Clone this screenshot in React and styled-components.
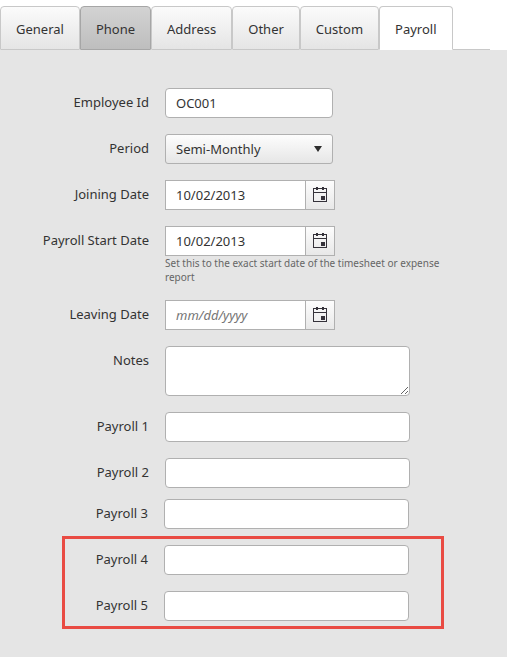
import { useState } from "react"
import styled, { createGlobalStyle } from "styled-components"

const tabs = ["General", "Phone", "Address", "Other", "Custom", "Payroll"];

function CalendarIcon() {
    return (
        <svg width="14" height="16" viewBox="0 0 14 16" shapeRendering="crispEdges" aria-hidden="true">
            <path d="M0 1h14v14H0z M1 2v3h12V2z M1 6v8h12V6z" fill="#35323a" fillRule="evenodd" />
            <path d="M3 0h2v3H3z M9 0h2v3H9z M8 9h4v4H8z" fill="#35323a" />
        </svg>
    )
}

function DateField({ id, label, value, hint }) {
    return (
        <Row>
            <Label htmlFor={id}>{label}</Label>
            <Control>
                <DateBox>
                    <DateInput id={id} type="text" placeholder="mm/dd/yyyy" defaultValue={value} />
                    <DateButton type="button" aria-label={`Open calendar for ${label}`}>
                        <CalendarIcon />
                    </DateButton>
                </DateBox>
                {hint && <Hint>{hint}</Hint>}
            </Control>
        </Row>
    )
}

function TextField({ id, label, value, wide }) {
    return (
        <Row>
            <Label htmlFor={id}>{label}</Label>
            <Control>
                <Input id={id} type="text" defaultValue={value} $wide={wide} />
            </Control>
        </Row>
    )
}

function App() {

    const [active, setactive] = useState("Payroll");
    const [period, setperiod] = useState("Semi-Monthly");

    return (
        <Page>
            <GlobalStyle />
            <TabBar role="tablist">
                {tabs.map((tab) => {
                    return (
                        <Tab
                            key={tab}
                            type="button"
                            role="tab"
                            aria-selected={active === tab}
                            $active={active === tab}
                            $pressed={tab === "Phone"}
                            onClick={() => setactive(tab)}
                        >
                            {tab}
                        </Tab>
                    )
                })}
                <TabLine />
            </TabBar>
            <Panel>
                <Fields>
                    <TextField id="employee-id" label="Employee Id" value="OC001" />
                    <Row>
                        <Label htmlFor="period">Period</Label>
                        <Control>
                            <SelectBox>
                                <Select id="period" value={period} onChange={(e) => setperiod(e.target.value)}>
                                    <option>Semi-Monthly</option>
                                </Select>
                                <Arrow width="8" height="6" viewBox="0 0 8 6" aria-hidden="true">
                                    <path d="M0 0h8L4 6z" fill="#2e2e2e" />
                                </Arrow>
                            </SelectBox>
                        </Control>
                    </Row>
                    <DateField id="joining-date" label="Joining Date" value="10/02/2013" />
                    <DateField
                        id="payroll-start"
                        label="Payroll Start Date"
                        value="10/02/2013"
                        hint="Set this to the exact start date of the timesheet or expense report"
                    />
                    <DateField id="leaving-date" label="Leaving Date" />
                    <Row>
                        <Label htmlFor="notes">Notes</Label>
                        <Control>
                            <TextArea id="notes" />
                        </Control>
                    </Row>
                    <TextField id="payroll-1" label="Payroll 1" wide />
                    <TextField id="payroll-2" label="Payroll 2" wide />
                </Fields>
                <CustomFields>
                    <TextField id="payroll-3" label="Payroll 3" wide />
                </CustomFields>
                <Highlight>
                    <TextField id="payroll-4" label="Payroll 4" wide />
                    <TextField id="payroll-5" label="Payroll 5" wide />
                </Highlight>
            </Panel>
        </Page>
    )
}

const GlobalStyle = createGlobalStyle`
    * {
        box-sizing: border-box;
    }
    body {
        margin: 0;
        background: #fff;
    }
    body, button, input, select, textarea {
        font-family: "Noto Sans", "Open Sans", sans-serif;
        font-size: 13px;
        color: #333;
    }
`;

const Page = styled.div`
    display: flex;
    flex-direction: column;
    min-height: 100vh;
`;

const TabBar = styled.div`
    display: flex;
    padding: 6px 17px 0 0;
`;

const Tab = styled.button`
    height: 44px;
    padding: 2px 15px 0;
    border: 1px solid ${(props) => (props.$pressed ? "#a6a6a6" : "#c8c8c8")};
    border-bottom-color: ${(props) => props.$active && "#fff"};
    border-radius: 4px 4px 0 0;
    background: ${(props) => {
        if (props.$active) return "#fff";
        return props.$pressed
            ? "linear-gradient(#d3d3d3, #bebebe)"
            : "linear-gradient(#fbfbfb, #e5e5e5)";
    }};
    cursor: pointer;
`;

const TabLine = styled.div`
    flex: 1;
    border-bottom: 1px solid #c8c8c8;
`;

const Panel = styled.form`
    flex: 1;
    padding: 38px 0 28px;
    background: #e5e5e5;
`;

const Fields = styled.div`
    display: flex;
    flex-direction: column;
    gap: 16px;
`;

const Row = styled.div`
    display: flex;
    align-items: flex-start;
    gap: 16px;
`;

const Label = styled.label`
    flex: none;
    width: 149px;
    line-height: 28px;
    text-align: right;
`;

const Control = styled.div`
    flex: 1;
    min-width: 0;
`;

const Input = styled.input`
    display: block;
    width: ${(props) => (props.$wide ? "245px" : "168px")};
    max-width: 100%;
    height: 30px;
    padding: 0 10px;
    border: 1px solid #b0b0b0;
    border-radius: 4px;
    background: #fff;
`;

const SelectBox = styled.div`
    position: relative;
    width: 168px;
`;

const Select = styled.select`
    display: block;
    width: 100%;
    height: 30px;
    padding: 0 24px 0 10px;
    border: 1px solid #b0b0b0;
    border-radius: 3px;
    background: linear-gradient(#fdfdfd, #e6e6e6);
    appearance: none;
`;

const Arrow = styled.svg`
    position: absolute;
    top: 12px;
    right: 11px;
    pointer-events: none;
`;

const DateBox = styled.div`
    display: flex;
    width: 170px;
    height: 30px;
    border: 1px solid #b0b0b0;
    background: #fff;
`;

const DateInput = styled.input`
    flex: 1;
    min-width: 0;
    padding: 0 10px;
    border: 0;
    background: transparent;
    &::placeholder {
        font-style: italic;
        color: #757575;
    }
`;

const DateButton = styled.button`
    display: flex;
    align-items: center;
    justify-content: center;
    width: 29px;
    padding: 0;
    border: 0;
    border-left: 1px solid #b0b0b0;
    background: linear-gradient(#fdfdfd, #e8e8e8);
`;

const Hint = styled.div`
    max-width: 290px;
    font-size: 10px;
    line-height: 14px;
    color: #666;
`;

const TextArea = styled.textarea`
    display: block;
    width: 245px;
    max-width: 100%;
    height: 50px;
    padding: 4px 10px;
    border: 1px solid #b0b0b0;
    border-radius: 4px;
    background: #fff;
`;

const CustomFields = styled.div`
    margin-top: 11px;
    ${Label} {
        width: 148px;
    }
`;

const Highlight = styled.div`
    display: flex;
    flex-direction: column;
    gap: 16px;
    max-width: 382px;
    margin: 7px 0 0 62px;
    padding: 6px 0 5px;
    border: 3px solid #e94b43;
    ${Label} {
        width: 83px;
    }
`;

export default App
